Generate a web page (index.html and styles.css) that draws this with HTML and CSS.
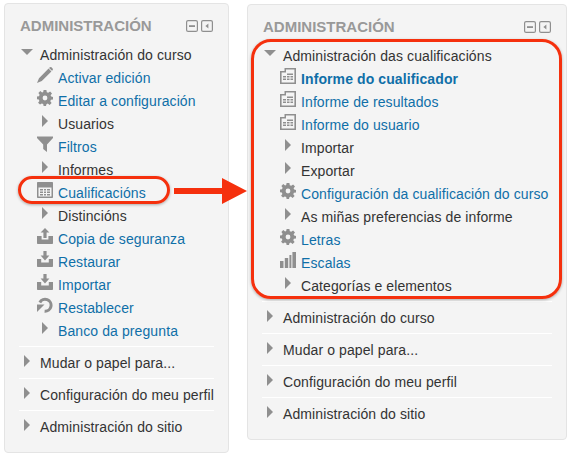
FILE: index.html
```html
<!DOCTYPE html>
<html>
<head>
<meta charset="UTF-8">
<title>Administración</title>
<link rel="stylesheet" href="styles.css">
</head>
<body>
<svg class="sprite" xmlns="http://www.w3.org/2000/svg">
	<symbol id="i-pencil" viewBox="0 0 16 16"><path d="M11.6 1.6 14.4 4.4 4.8 14 0 16 2 11.2ZM12.6.6C13.3-.1 14-.1 14.6.4L15.6 1.4C16.1 2 16.1 2.7 15.4 3.4L15 3.8 12 .9Z" fill="#8f8f8f"/></symbol>
	<symbol id="i-gear" viewBox="0 0 16 16"><path fill-rule="evenodd" fill="#8f8f8f" d="M6.6 0H9.4L9.8 2.2 11.2 2.8 13.1 1.5 15 3.4 13.6 5.2 14.2 6.6 16 7V9.4L13.9 9.8 13.3 11.2 14.6 13 12.6 15 10.8 13.6 9.4 14.2 9 16H6.6L6.2 14 4.8 13.4 3 14.6 1.1 12.7 2.4 10.9 1.8 9.5 0 9.2V6.6L2 6.2 2.6 4.8 1.4 3 3.3 1.1 5.1 2.4 6.2 1.9ZM8 5.6A2.4 2.4 0 1 0 8 10.4 2.4 2.4 0 1 0 8 5.6Z"/></symbol>
	<symbol id="i-funnel" viewBox="0 0 16 16"><path d="M0 .5H16V2L10 8.5V16L6.2 13V8.5L0 2Z" fill="#8f8f8f"/></symbol>
	<symbol id="i-table" viewBox="0 0 16 16"><path fill-rule="evenodd" fill="#8f8f8f" d="M1 0H15C15.6 0 16 .4 16 1V15C16 15.6 15.6 16 15 16H1C.4 16 0 15.6 0 15V1C0 .4.4 0 1 0ZM1.5 5.5V14.5H14.5V5.5Z"/><path fill="#8f8f8f" d="M3 7H6V8.5H3ZM7 7H9V8.5H7ZM10 7H13V8.5H10ZM3 9.5H6V11H3ZM7 9.5H9V11H7ZM10 9.5H13V11H10ZM3 12H6V13.5H3ZM7 12H9V13.5H7ZM10 12H13V13.5H10Z"/></symbol>
	<symbol id="i-report" viewBox="0 0 16 16"><path fill-rule="evenodd" fill="#8f8f8f" d="M0 3H4.5V0H16V16H0ZM6 1.6V4.6H1.6V14.4H14.4V1.6Z"/><path fill="#8f8f8f" d="M7 5.5H13V7H7ZM3 8H6V9.5H3ZM7 8H9.5V9.5H7ZM10.5 8H13V9.5H10.5ZM3 10.5H6V12H3ZM7 10.5H9.5V12H7ZM10.5 10.5H13V12H10.5Z"/></symbol>
	<symbol id="i-upload" viewBox="0 0 16 16"><path fill="#8f8f8f" d="M8 0 12.4 4.4H9.6V10H6.4V4.4H3.6ZM0 8H4.6V11.6H11.4V8H16V15C16 15.6 15.6 16 15 16H1C.4 16 0 15.6 0 15Z"/></symbol>
	<symbol id="i-download" viewBox="0 0 16 16"><path fill="#8f8f8f" d="M6.4 0H9.6V4.6H12.4L8 9.6 3.6 4.6H6.4ZM0 8H4.2V11.6H11.8V8H16V15C16 15.6 15.6 16 15 16H1C.4 16 0 15.6 0 15Z"/></symbol>
	<symbol id="i-reset" viewBox="0 0 16 16"><path fill="none" stroke="#8f8f8f" stroke-width="3" d="M2.8 5.4A6 6 0 1 1 7.6 14.3"/><path fill="#8f8f8f" d="M0 7.5H7.5L0 15Z"/></symbol>
	<symbol id="i-bars" viewBox="0 0 16 16"><path fill="#8f8f8f" d="M0 9H3.5V16H0ZM4.8 6H8.2V16H4.8ZM9.4 3H11.4V16H9.4ZM12.4 0H16V16H12.4Z"/></symbol>
	<symbol id="i-hide" viewBox="0 0 12 12"><rect x=".6" y=".6" width="10.8" height="10.8" rx="1.5" fill="#f4f4f4" stroke="#8f8f8f" stroke-width="1.2"/><path d="M3 5.2H9V7H3Z" fill="#8f8f8f"/></symbol>
	<symbol id="i-dock" viewBox="0 0 12 12"><rect x=".6" y=".6" width="10.8" height="10.8" rx="1.5" fill="#f4f4f4" stroke="#8f8f8f" stroke-width="1.2"/><path d="M7.4 3.4V8.6L4.4 6Z" fill="#8f8f8f"/></symbol>
</svg>

<div class="page">
	<section class="block block-left">
		<div class="block-head">
			<h2>ADMINISTRACIÓN</h2>
			<div class="controls">
				<svg class="ctl"><use href="#i-hide"/></svg>
				<svg class="ctl"><use href="#i-dock"/></svg>
			</div>
		</div>
		<div class="group">
			<div class="row"><span class="tri tri-down"></span>Administración do curso</div>
			<div class="row sub"><svg class="ico"><use href="#i-pencil"/></svg><a href="#">Activar edición</a></div>
			<div class="row sub"><svg class="ico"><use href="#i-gear"/></svg><a href="#">Editar a configuración</a></div>
			<div class="row sub"><span class="slot"><span class="tri"></span></span>Usuarios</div>
			<div class="row sub"><svg class="ico"><use href="#i-funnel"/></svg><a href="#">Filtros</a></div>
			<div class="row sub"><span class="slot"><span class="tri"></span></span>Informes</div>
			<div class="row sub"><svg class="ico"><use href="#i-table"/></svg><a href="#">Cualificacións</a></div>
			<div class="row sub"><span class="slot"><span class="tri"></span></span>Distincións</div>
			<div class="row sub"><svg class="ico"><use href="#i-upload"/></svg><a href="#">Copia de seguranza</a></div>
			<div class="row sub"><svg class="ico"><use href="#i-download"/></svg><a href="#">Restaurar</a></div>
			<div class="row sub"><svg class="ico"><use href="#i-download"/></svg><a href="#">Importar</a></div>
			<div class="row sub"><svg class="ico"><use href="#i-reset"/></svg><a href="#">Restablecer</a></div>
			<div class="row sub"><span class="slot"><span class="tri"></span></span><a href="#">Banco da pregunta</a></div>
		</div>
		<div class="closed"><span class="tri"></span>Mudar o papel para...</div>
		<div class="closed"><span class="tri"></span>Configuración do meu perfil</div>
		<div class="closed"><span class="tri"></span>Administración do sitio</div>
	</section>

	<section class="block block-right">
		<div class="block-head">
			<h2>ADMINISTRACIÓN</h2>
			<div class="controls">
				<svg class="ctl"><use href="#i-hide"/></svg>
				<svg class="ctl"><use href="#i-dock"/></svg>
			</div>
		</div>
		<div class="group">
			<div class="row"><span class="tri tri-down"></span>Administración das cualificacións</div>
			<div class="row sub"><svg class="ico"><use href="#i-report"/></svg><a href="#" class="current">Informe do cualificador</a></div>
			<div class="row sub"><svg class="ico"><use href="#i-report"/></svg><a href="#">Informe de resultados</a></div>
			<div class="row sub"><svg class="ico"><use href="#i-report"/></svg><a href="#">Informe do usuario</a></div>
			<div class="row sub"><span class="slot"><span class="tri"></span></span>Importar</div>
			<div class="row sub"><span class="slot"><span class="tri"></span></span>Exportar</div>
			<div class="row sub"><svg class="ico"><use href="#i-gear"/></svg><a href="#">Configuración da cualificación do curso</a></div>
			<div class="row sub"><span class="slot"><span class="tri"></span></span>As miñas preferencias de informe</div>
			<div class="row sub"><svg class="ico"><use href="#i-gear"/></svg><a href="#">Letras</a></div>
			<div class="row sub"><svg class="ico"><use href="#i-bars"/></svg><a href="#">Escalas</a></div>
			<div class="row sub"><span class="slot"><span class="tri"></span></span>Categorías e elementos</div>
		</div>
		<div class="closed"><span class="tri"></span>Administración do curso</div>
		<div class="closed"><span class="tri"></span>Mudar o papel para...</div>
		<div class="closed"><span class="tri"></span>Configuración do meu perfil</div>
		<div class="closed"><span class="tri"></span>Administración do sitio</div>
	</section>

	<div class="mark mark-small"></div>
	<div class="mark mark-big"></div>
	<svg class="arrow" width="74" height="26" viewBox="0 0 74 26"><path d="M0 10H48V0L73 13 48 26V16H0Z" fill="#f5300d"/></svg>
</div>
</body>
</html>
```

FILE: styles.css
```css
body {
	margin: 0;
	background: #fff;
	font-family: "Liberation Sans", Arial, sans-serif;
	font-size: 14px;
	letter-spacing: .1px;
	color: #333;
}

.sprite {
	display: none;
}

.page {
	position: relative;
	display: flex;
	align-items: flex-start;
	gap: 18px;
	padding: 3px 5px 0 4px;
}

.block {
	box-sizing: border-box;
	padding: 0 14px;
	background: #f4f4f4;
	border: 1px solid #e4e4e4;
	border-radius: 4px;
}

.block-left {
	width: 225px;
	height: 450px;
}

.block-right {
	width: 320px;
	height: 436px;
	margin-top: 1px;
}

.block-head {
	display: flex;
	align-items: center;
	justify-content: space-between;
	height: 39px;
	padding: 4px 1px 0 1px;
	box-sizing: border-box;
}

.block-head h2 {
	margin: 0;
	font-size: 15px;
	font-weight: bold;
	letter-spacing: 0;
	color: #999;
}

.controls {
	display: flex;
	gap: 3px;
}

.ctl {
	width: 12px;
	height: 12px;
}

.group {
	padding-bottom: 4px;
}

.row {
	display: flex;
	align-items: center;
	height: 23px;
	padding-left: 2px;
}

.sub {
	padding-left: 18px;
}

.ico {
	flex: none;
	width: 16px;
	height: 16px;
	margin-top: -6px;
	margin-right: 5px;
}

.slot {
	flex: none;
	display: flex;
	justify-content: center;
	width: 16px;
	margin-right: 5px;
	margin-top: -5px;
}

.slot .tri {
	margin: 0;
}

.tri {
	flex: none;
	width: 0;
	height: 0;
	margin-right: 10px;
	margin-left: 3px;
	border-style: solid;
	border-width: 6px 0 6px 6px;
	border-color: transparent transparent transparent #8f8f8f;
}

.tri-down {
	margin-left: 0;
	margin-right: 7px;
	margin-top: -5px;
	border-width: 6px 6px 0 6px;
	border-color: #8f8f8f transparent transparent transparent;
}

a {
	color: #0f6fa8;
	text-decoration: none;
}

.current {
	font-weight: bold;
}

.closed {
	display: flex;
	align-items: center;
	height: 32px;
	padding-left: 2px;
	border-top: 1px solid #fff;
	box-sizing: border-box;
}

.closed .tri {
	margin-top: -3px;
}

.mark {
	position: absolute;
	box-sizing: border-box;
	border: 3px solid #f5300d;
	box-shadow: 0 1px 3px rgba(0, 0, 0, .3);
}

.mark-small {
	left: 18px;
	top: 176px;
	width: 152px;
	height: 28px;
	border-radius: 14px;
}

.mark-big {
	left: 251px;
	top: 39px;
	width: 311px;
	height: 260px;
	border-radius: 20px;
}

.arrow {
	position: absolute;
	left: 174px;
	top: 178px;
}
```
